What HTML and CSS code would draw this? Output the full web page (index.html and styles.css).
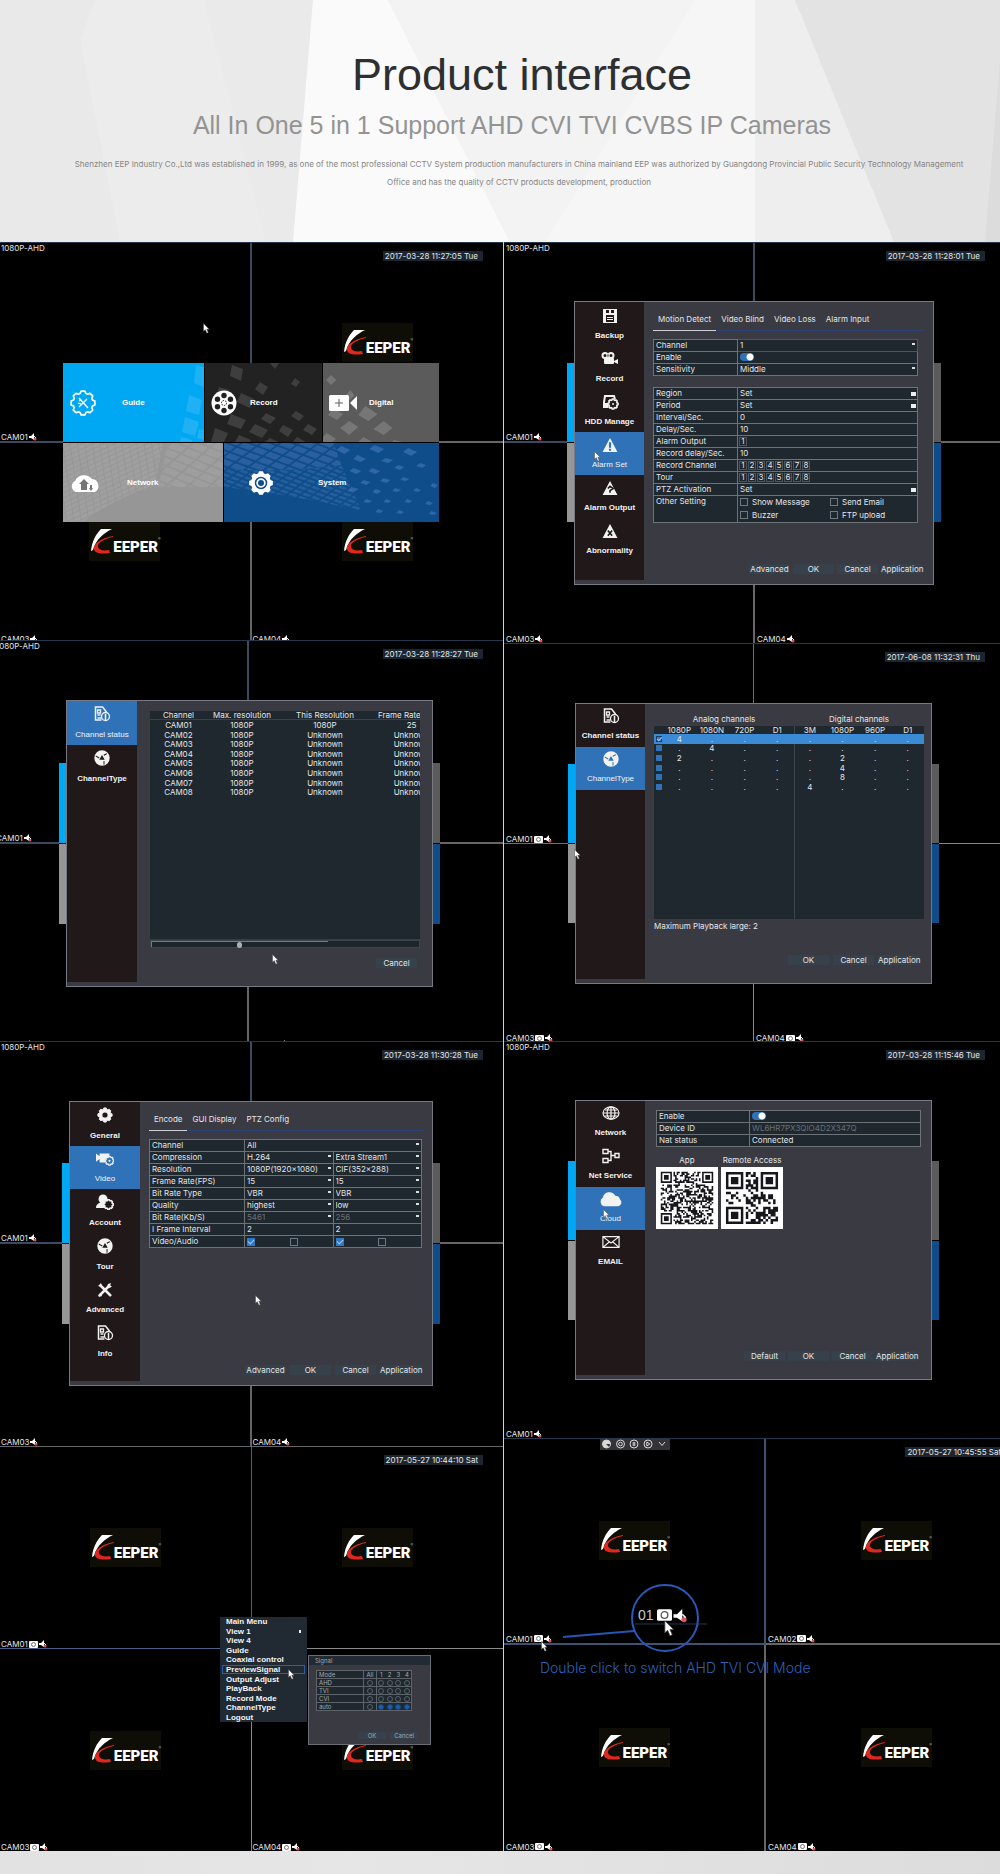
FILE: index.html
```html
<!DOCTYPE html>
<html lang="en">
<head>
<meta charset="utf-8">
<meta name="viewport" content="width=device-width, initial-scale=1">
<title>Product interface</title>
<link rel="stylesheet" href="styles.css">
</head>
<body>
<svg class="defs" aria-hidden="true">
  <defs>
    <path id="gear-shape" d="M11.85,-1.88L11.85,1.88L9.56,2.92L8.83,4.69L9.71,7.05L7.05,9.71L4.69,8.83L2.92,9.56L1.88,11.85L-1.88,11.85L-2.92,9.56L-4.69,8.83L-7.05,9.71L-9.71,7.05L-8.83,4.69L-9.56,2.92L-11.85,1.88L-11.85,-1.88L-9.56,-2.92L-8.83,-4.69L-9.71,-7.05L-7.05,-9.71L-4.69,-8.83L-2.92,-9.56L-1.88,-11.85L1.88,-11.85L2.92,-9.56L4.69,-8.83L7.05,-9.71L9.71,-7.05L8.83,-4.69L9.56,-2.92Z"/>
  </defs>
  <symbol id="i-cam" viewBox="0 0 9 7"><rect width="9" height="7" rx="1" fill="#fff"/><circle cx="4.500" cy="3.500" r="2" fill="none" stroke="#555" stroke-width=".8"/></symbol>
  <symbol id="i-mute" viewBox="0 0 8 8"><path d="M0 3h2l3-3v7L2 5H0z" fill="#fff"/><circle cx="6" cy="6" r="1.500" fill="#e2545c"/><path d="M5 3l2 2" stroke="#eee"/></symbol>
  <symbol id="i-cursor" viewBox="0 0 7 11"><path d="M.5.500v7.800l1.800-1.600 1.500 3.500 1.500-.7-1.500-3.300h2.400z" fill="#fff" stroke="#444" stroke-width=".5"/></symbol>
  <symbol id="i-swoosh" viewBox="0 0 22 25"><path d="M0 22C1 12 5 5 10 0h11C13 4 5 10 2 21z" fill="#fff"/><path d="M22 7C10 9 2 15 3 20c1 5 8 5 16 4l-1-3c-6 1-10 0-11-3C6 14 13 10 22 8z" fill="#e0281e"/></symbol>
  <symbol id="i-disk" viewBox="0 0 16 16"><path fill="currentColor" fill-rule="evenodd" d="M1 1h14v14H1zM4 2v3h3V2zM4 7v7h8V7zM9 2v3h3V2z"/><path stroke="currentColor" d="M5 9.500h6M5 11.500h6"/></symbol>
  <symbol id="i-film" viewBox="0 0 18 14"><g fill="currentColor"><path fill-rule="evenodd" d="M4 0a3.500 3.500 0 110 7 3.500 3.500 0 010-7m0 2a1.500 1.500 0 100 3 1.500 1.500 0 000-3M10 0a3.500 3.500 0 110 7 3.500 3.500 0 010-7m0 2a1.500 1.500 0 100 3 1.500 1.500 0 000-3"/><rect x="3" y="6" width="10" height="6" rx="1"/><path d="M13 9l4-2v5l-4-2z"/></g></symbol>
  <symbol id="i-hdd" viewBox="0 0 18 16"><path fill="none" stroke="currentColor" stroke-width="2" d="M7 13H3V8l1-6h9l1 3"/><path fill="currentColor" d="M2 9h5v5H2z"/><use href="#gear-shape" transform="translate(12 10) scale(.42)" fill="none" stroke="currentColor" stroke-width="4"/><circle cx="12" cy="10" r="1" fill="currentColor"/></symbol>
  <symbol id="i-warn" viewBox="0 0 16 15"><path fill="currentColor" fill-rule="evenodd" d="M8 1l7 13H1zM7 5v5h2V5zm0 6v2h2v-2z"/></symbol>
  <symbol id="i-warn-out" viewBox="0 0 16 15"><path fill="currentColor" d="M8 1l7 13H1z"/><path fill="none" stroke="#211819" stroke-width="1.500" d="M6 8l2-2 3 2-3 2v2"/></symbol>
  <symbol id="i-warn-x" viewBox="0 0 16 15"><path fill="currentColor" d="M8 1l7 13H1z"/><path stroke="#211819" stroke-width="1.500" d="M6 7l4 5M10 7l-4 5"/></symbol>
  <symbol id="i-doc" viewBox="0 0 17 16"><path fill="none" stroke="currentColor" stroke-width="1.500" d="M8 14H2V1h7l4 5"/><path fill="none" stroke="currentColor" stroke-width="1.300" d="M4 4h3v3H4zM4 9h3M4 12h4"/><circle cx="12" cy="10.500" r="4" fill="none" stroke="currentColor" stroke-width="1.300"/><path stroke="currentColor" stroke-width="1.500" d="M12 8v6"/></symbol>
  <symbol id="i-cycle" viewBox="0 0 16 16"><path fill="currentColor" fill-rule="evenodd" d="M8 .3a7.700 7.700 0 110 15.400A7.700 7.700 0 018 .3M8 5L5.300 9.800h5.400zM9.500 4.800l3-1.600.7.800-3 1.800zM10.500 11v3.500l-1 .3v-3.600zM5 8.400L1.600 6.600l.3-1L5.500 7.500z"/></symbol>
  <symbol id="i-gear" viewBox="0 0 16 16"><use href="#gear-shape" transform="translate(8 8) scale(.6)" fill="currentColor" stroke="currentColor" stroke-width="1.500"/><circle cx="8" cy="8" r="2.600" fill="#211819"/></symbol>
  <symbol id="i-video" viewBox="0 0 20 14"><path fill="currentColor" d="M0 1l4 3V1h11v3a6 6 0 00-5 7H4V7l-4 3z"/><use href="#gear-shape" transform="translate(15 9) scale(.4)" fill="none" stroke="currentColor" stroke-width="3.500"/><circle cx="15" cy="9" r="1.200" fill="currentColor"/></symbol>
  <symbol id="i-user" viewBox="0 0 18 16"><circle cx="7" cy="5" r="4.500" fill="currentColor"/><path fill="currentColor" d="M0 14c0-4 3-6 8-5v5z"/><use href="#gear-shape" transform="translate(12.500 10.500) scale(.4)" fill="#211819" stroke="currentColor" stroke-width="4"/></symbol>
  <symbol id="i-tools" viewBox="0 0 16 16"><path d="M3 3l10 10M13 3L3 13" stroke="currentColor" stroke-width="2.500"/><path d="M1 4l3-3 1 4zM10 10l5 3-2 2z" fill="currentColor"/><path d="M11 2l3-1-1 3 2 0-2 2-3-1zM1 13l3-2 1 3-3 1z" fill="currentColor"/></symbol>
  <symbol id="i-globe" viewBox="0 0 18 14"><g fill="none" stroke="currentColor" stroke-width="1.200"><ellipse cx="9" cy="7" rx="8" ry="6.200"/><ellipse cx="9" cy="7" rx="4" ry="6.200"/><path d="M9 1v12M1 7h16M3 4h12M3 10h12"/></g></symbol>
  <symbol id="i-net" viewBox="0 0 18 15"><g fill="none" stroke="currentColor" stroke-width="1.400"><path d="M1 1h5v4H1zM1 10h5v4H1zM13 5h4v4h-4zM6 3h3v9H6M9 7h4"/></g></symbol>
  <symbol id="i-cloud" viewBox="0 0 24 15"><path fill="currentColor" d="M5 15a5 5 0 01-1-9 7 7 0 0113-2 5 5 0 015 4 4 4 0 01-2 7z"/></symbol>
  <symbol id="i-mail" viewBox="0 0 20 14"><path fill="none" stroke="currentColor" stroke-width="1.300" d="M1 1h18v12H1zl9 7 9-7M1 13l7-6M19 13l-7-6"/></symbol>
  <symbol id="i-guide" viewBox="0 0 26 26"><use href="#gear-shape" transform="translate(13 13)" fill="none" stroke="#fff" stroke-width="1.700" stroke-linejoin="round"/><path d="M9 8l9 10M17 9l-8 8M9 11l3-1M8 13l3 1" stroke="#fff" stroke-width="1.300"/></symbol>
  <symbol id="i-reel" viewBox="0 0 26 26"><circle cx="13" cy="13" r="12.500" fill="#fff"/><g fill="#222"><circle cx="13" cy="5.500" r="2.700"/><circle cx="19.500" cy="9.200" r="2.700"/><circle cx="19.500" cy="16.800" r="2.700"/><circle cx="13" cy="20.500" r="2.700"/><circle cx="6.500" cy="16.800" r="2.700"/><circle cx="6.500" cy="9.200" r="2.700"/></g><circle cx="13" cy="13" r="2.500" fill="none" stroke="#222" stroke-dasharray="1.500 1"/></symbol>
  <symbol id="i-digital" viewBox="0 0 28 16"><rect width="20" height="16" rx="1.500" fill="#fff"/><path d="M21 8l7-7v14z" fill="#fff"/><path d="M10 4v8M6 8h8" stroke="#5c5c5c"/></symbol>
  <symbol id="i-upload" viewBox="0 0 30 18"><path fill="#fff" d="M6 18a6 6 0 01-1-11A10 10 0 0122 5a7 7 0 013 13z"/><path fill="#777" d="M14 5l5 5h-2v6h-6v-6H9zM20 11h2v3h1l-2 3-2-3h1z"/></symbol>
  <symbol id="i-system" viewBox="0 0 26 26"><use href="#gear-shape" transform="translate(13 13)" fill="#fff"/><circle cx="13" cy="13" r="5.500" fill="none" stroke="#0f4c8a" stroke-width="1.500"/><circle cx="13" cy="13" r="3" fill="#0f4c8a"/></symbol>
</svg>

<header class="hero">
  <svg class="hero-art" viewBox="0 0 1000 242" preserveAspectRatio="none" aria-hidden="true">
    <rect width="1000" height="242" fill="#ececec"/>
    <path d="M0 0h95L80 40l40 202H0z" fill="#e9e9e9"/>
    <path d="M204 0h109l-20 242h-27z" fill="#eaeaea"/>
    <path d="M313 0h75l122 242H293z" fill="#fafafa"/>
    <path d="M388 0h367v242H510z" fill="#f3f3f3"/>
    <path d="M695 0h60v242H545z" fill="#f6f6f6"/>
    <path d="M755 0h40l99 242H755z" fill="#eeeeee"/>
    <path d="M795 0h205v242H894z" fill="#e3e3e3"/>
    <path d="M1000 60v182h-15z" fill="#dcdcdc"/>
  </svg>
  <h1>Product interface</h1>
  <p class="tagline">All In One 5 in 1 Support AHD CVI TVI CVBS IP Cameras</p>
  <p class="blurb">Shenzhen EEP Industry Co.,Ltd was established in 1999, as one of the most professional CCTV System production manufacturers in China mainland EEP was authorized by Guangdong Provincial Public Security Technology Management<br>Office and has the quality of CCTV products development, production</p>
</header>

<main class="gallery">
  <div class="column column-left">

    <section class="screen s-home">
      <div class="cell c1"><span class="top">1080P-AHD</span><span class="foot">CAM01<svg class="mute"><use href="#i-mute"/></svg></span></div>
      <div class="cell c2"><time class="stamp">2017-03-28 11:27:05 Tue</time><div class="logo"><svg><use href="#i-swoosh"/></svg><b>EEPER</b><sup>®</sup></div></div>
      <div class="cell c3"><div class="logo"><svg><use href="#i-swoosh"/></svg><b>EEPER</b><sup>®</sup></div><span class="foot">CAM03<svg class="mute"><use href="#i-mute"/></svg></span></div>
      <div class="cell c4"><div class="logo"><svg><use href="#i-swoosh"/></svg><b>EEPER</b><sup>®</sup></div><span class="foot">CAM04<svg class="mute"><use href="#i-mute"/></svg></span></div>
      <nav class="home">
        <a class="tile t-guide" href="#guide">
          <svg class="mosaic" viewBox="0 0 141 79" preserveAspectRatio="none"><g fill="#fff" opacity=".12"><path d="M133 2l8 2v20l-10-4zM126 32l13 5-3 15-13-4zM122 54l14 5-4 14-13-4zM118 74l11 3v2h-12zM136 66l5 1v10l-7-2z"/></g></svg>
          <svg class="glyph"><use href="#i-guide"/></svg><span>Guide</span></a>
        <a class="tile t-record" href="#record">
          <svg class="mosaic" viewBox="0 0 117 79" preserveAspectRatio="none"><g fill="#fff" opacity=".13"><path d="M27 2l11 4-2 12-11-5zM55 19l8 5-5 8-8-6zM65 0h9l-4 6zM90 15l5 4-4 5-5-3zM36 30l13 6-4 9-13-6zM14 24l10 3-2 8-10-4zM61 50l10 5-6 6-9-5zM91 48l8 5-5 5-8-5zM26 51l15 6-5 9-14-5zM50 61l13 6-6 8-13-6zM78 62l10 5-5 7-9-6zM103 61l9 5-5 6-9-5zM10 65l13 5-4 9H6zM34 72l12 5-1 2H30zM65 75l8 4H60zM92 74l9 5H88z"/></g></svg>
          <svg class="glyph"><use href="#i-reel"/></svg><span>Record</span></a>
        <a class="tile t-digital" href="#digital">
          <svg class="mosaic" viewBox="0 0 115 79" preserveAspectRatio="none"><g fill="#fff" opacity=".17"><path d="M8 12l5 5-5 5-5-5zM27 27l4 5-4 5-5-4zM42 43l12 8-9 7-10-6zM10 45l10 6-6 6-9-5zM26 58l9 6-9 8-9-7zM60 58l9 7-9 7-10-6zM4 70l9 6-4 3H0v-5zM40 74l9 5H35zM70 77l9 2h-10z"/></g></svg>
          <svg class="glyph"><use href="#i-digital"/></svg><span>Digital</span></a>
        <a class="tile t-network" href="#network">
          <svg class="mosaic" viewBox="0 0 160 79" preserveAspectRatio="none"><defs><pattern id="weave" width="7" height="5" patternUnits="userSpaceOnUse" patternTransform="skewY(-18) rotate(-8)"><path d="M0 0h6v4H0z" fill="#fff" opacity=".09"/></pattern><pattern id="weave2" width="15" height="9" patternUnits="userSpaceOnUse" patternTransform="skewY(22) skewX(-38)"><path d="M0 0h13v7H0z" fill="#fff" opacity=".08"/></pattern></defs><path d="M0 0h100l-8 42Q50 56 20 79H0z" fill="url(#weave)"/><path d="M105 0h55v44H95z" fill="url(#weave2)"/></svg>
          <svg class="glyph"><use href="#i-upload"/></svg><span>Network</span></a>
        <a class="tile t-system" href="#system">
          <svg class="mosaic" viewBox="0 0 216 79" preserveAspectRatio="none"><defs><pattern id="cubes" width="13" height="8" patternUnits="userSpaceOnUse" patternTransform="skewY(20) skewX(-42)"><path d="M0 0h11v6H0z" fill="#6f8fd8" opacity=".28"/></pattern><pattern id="fine" width="9" height="5" patternUnits="userSpaceOnUse" patternTransform="skewY(20) skewX(-42)"><path d="M0 0h7v3H0z" fill="#6f9fe0" opacity=".22"/></pattern></defs><path d="M0 0h110l8 22Q60 30 0 26z" fill="url(#cubes)"/><path d="M0 26Q60 30 118 22l20 46Q70 52 0 44z" fill="url(#fine)"/><g fill="#5f8fd8" opacity=".4"><path d="M118 3l9 4-6 4-8-4zM151 2l10 4-6 4-9-4zM185 5l9 4-6 4-8-4zM134 12l9 4-6 3-7-3zM162 15l8 2-5 3-7-2zM130 25l8 3-5 3-7-3zM149 25l8 3-5 3-7-3zM175 22l6 2-4 3-6-2zM197 20l6 2-4 3-6-2zM140 37l7 2-4 3-6-2zM160 35l7 2-4 3-6-2zM180 34l6 2-3 2-6-1zM210 40l5 2-3 3-5-2zM128 44l7 2-4 3-6-2zM152 46l6 2-4 3-5-2zM172 45l6 2-4 2-5-1zM193 45l5 2-3 2-5-1zM143 56l6 2-4 2-5-1zM163 56l5 2-3 2-5-1zM184 56l5 2-3 2-5-1zM205 58l5 2-3 2-5-1zM155 66l5 2-3 2-5-1zM176 67l5 2-3 2-5-1zM208 68l6 2-3 2-5-1z"/></g></svg>
          <svg class="glyph"><use href="#i-system"/></svg><span>System</span></a>
      </nav>
      <svg class="cursor"><use href="#i-cursor"/></svg>
    </section>

    <section class="screen s-status">
      <div class="cell c1"><span class="top">1080P-AHD</span><span class="foot">CAM01<svg class="mute"><use href="#i-mute"/></svg></span></div>
      <div class="cell c2"><time class="stamp">2017-03-28 11:28:27 Tue</time></div>
      <div class="cell c3"><span class="foot">CAM03<svg class="mute"><use href="#i-mute"/></svg></span></div>
      <div class="cell c4"><span class="foot">CAM04<svg class="mute"><use href="#i-mute"/></svg></span></div>
      <div class="peek"><i></i><i></i><i></i><i></i></div>
      <div class="dialog">
        <nav class="side">
          <a class="on" href="#status"><svg><use href="#i-doc"/></svg>Channel status</a>
          <a href="#type"><svg><use href="#i-cycle"/></svg>ChannelType</a>
        </nav>
        <div class="body">
          <div class="list-box">
            <table class="list">
              <colgroup><col class="w1"><col class="w2"><col class="w3"><col class="w4"></colgroup>
              <thead><tr><th>Channel</th><th>Max. resolution</th><th>This Resolution</th><th class="lead">Frame Rate</th></tr></thead>
              <tbody>
                <tr><td>CAM01</td><td>1080P</td><td>1080P</td><td>25</td></tr>
                <tr><td>CAM02</td><td>1080P</td><td>Unknown</td><td>Unknown</td></tr>
                <tr><td>CAM03</td><td>1080P</td><td>Unknown</td><td>Unknown</td></tr>
                <tr><td>CAM04</td><td>1080P</td><td>Unknown</td><td>Unknown</td></tr>
                <tr><td>CAM05</td><td>1080P</td><td>Unknown</td><td>Unknown</td></tr>
                <tr><td>CAM06</td><td>1080P</td><td>Unknown</td><td>Unknown</td></tr>
                <tr><td>CAM07</td><td>1080P</td><td>Unknown</td><td>Unknown</td></tr>
                <tr><td>CAM08</td><td>1080P</td><td>Unknown</td><td>Unknown</td></tr>
              </tbody>
            </table>
          </div>
          <div class="scroll"><div class="thumb"><i></i></div></div>
          <div class="actions"><button>Cancel</button></div>
        </div>
      </div>
      <svg class="cursor"><use href="#i-cursor"/></svg>
    </section>

    <section class="screen s-encode">
      <div class="cell c1"><span class="top">1080P-AHD</span><span class="foot">CAM01<svg class="mute"><use href="#i-mute"/></svg></span></div>
      <div class="cell c2"><time class="stamp">2017-03-28 11:30:28 Tue</time></div>
      <div class="cell c3"><span class="foot">CAM03<svg class="mute"><use href="#i-mute"/></svg></span></div>
      <div class="cell c4"><span class="foot">CAM04<svg class="mute"><use href="#i-mute"/></svg></span></div>
      <div class="peek"><i></i><i></i><i></i><i></i></div>
      <div class="dialog">
        <nav class="side">
          <a href="#general"><svg><use href="#i-gear"/></svg>General</a>
          <a class="on" href="#video"><svg><use href="#i-video"/></svg>Video</a>
          <a href="#account"><svg><use href="#i-user"/></svg>Account</a>
          <a href="#tour"><svg><use href="#i-cycle"/></svg>Tour</a>
          <a href="#advanced"><svg><use href="#i-tools"/></svg>Advanced</a>
          <a href="#info"><svg><use href="#i-doc"/></svg>Info</a>
        </nav>
        <div class="body">
          <nav class="tabs"><a class="on" href="#encode">Encode</a><a href="#gui">GUI Display</a><a href="#ptz">PTZ Config</a></nav>
          <table class="form">
            <colgroup><col class="k"><col><col></colgroup>
            <tr><th><label for="e1">Channel</label></th><td colspan="2"><select id="e1"><option>All</option></select></td></tr>
            <tr><th><label for="e2">Compression</label></th><td><select id="e2"><option>H.264</option></select></td><td><select aria-label="Stream"><option>Extra Stream1</option></select></td></tr>
            <tr><th><label for="e3">Resolution</label></th><td><select id="e3"><option>1080P(1920x1080)</option></select></td><td><select aria-label="Extra resolution"><option>CIF(352x288)</option></select></td></tr>
            <tr><th><label for="e4">Frame Rate(FPS)</label></th><td><select id="e4"><option>15</option></select></td><td><select aria-label="Extra frame rate"><option>15</option></select></td></tr>
            <tr><th><label for="e5">Bit Rate Type</label></th><td><select id="e5"><option>VBR</option></select></td><td><select aria-label="Extra bit rate type"><option>VBR</option></select></td></tr>
            <tr><th><label for="e6">Quality</label></th><td><select id="e6"><option>highest</option></select></td><td><select aria-label="Extra quality"><option>low</option></select></td></tr>
            <tr><th><label for="e7">Bit Rate(Kb/S)</label></th><td><select id="e7" disabled><option>5461</option></select></td><td><select aria-label="Extra bit rate" disabled><option>256</option></select></td></tr>
            <tr><th><label for="e8">I Frame Interval</label></th><td><input id="e8" type="text" value="2"></td><td><input aria-label="Extra interval" type="text" value="2"></td></tr>
            <tr><th><label for="e9">Video/Audio</label></th><td><div class="pair"><input id="e9" type="checkbox" checked><input aria-label="Audio" type="checkbox"></div></td><td><div class="pair"><input aria-label="Extra video" type="checkbox" checked><input aria-label="Extra audio" type="checkbox"></div></td></tr>
          </table>
          <div class="actions"><button>Advanced</button><button>OK</button><button>Cancel</button><button>Application</button></div>
        </div>
      </div>
      <svg class="cursor"><use href="#i-cursor"/></svg>
    </section>

    <section class="screen s-menu">
      <div class="cell c1"><div class="logo"><svg><use href="#i-swoosh"/></svg><b>EEPER</b><sup>®</sup></div><span class="foot">CAM01<svg class="cam"><use href="#i-cam"/></svg><svg class="mute"><use href="#i-mute"/></svg></span></div>
      <div class="cell c2"><time class="stamp">2017-05-27 10:44:10 Sat</time><div class="logo"><svg><use href="#i-swoosh"/></svg><b>EEPER</b><sup>®</sup></div></div>
      <div class="cell c3"><div class="logo"><svg><use href="#i-swoosh"/></svg><b>EEPER</b><sup>®</sup></div><span class="foot">CAM03<svg class="cam"><use href="#i-cam"/></svg><svg class="mute"><use href="#i-mute"/></svg></span></div>
      <div class="cell c4"><div class="logo"><svg><use href="#i-swoosh"/></svg><b>EEPER</b><sup>®</sup></div><span class="foot">CAM04<svg class="cam"><use href="#i-cam"/></svg><svg class="mute"><use href="#i-mute"/></svg></span></div>
      <div class="menu">
        <button>Main Menu</button><button class="sub">View 1</button><button>View 4</button><button>Guide</button><button>Coaxial control</button><button class="on">PreviewSignal</button><button>Output Adjust</button><button>PlayBack</button><button>Record Mode</button><button>ChannelType</button><button>Logout</button>
      </div>
      <div class="signal">
        <h2>Signal</h2>
        <table>
          <colgroup><col class="m"><col class="a"><col><col><col><col></colgroup>
          <tr><th>Mode</th><td>All</td><td>1</td><td>2</td><td>3</td><td>4</td></tr>
          <tr><th>AHD</th><td><input type="radio" aria-label="AHD all"></td><td><input type="radio" name="r1" aria-label="AHD 1"></td><td><input type="radio" name="r2" aria-label="AHD 2"></td><td><input type="radio" name="r3" aria-label="AHD 3"></td><td><input type="radio" name="r4" aria-label="AHD 4"></td></tr>
          <tr><th>TVI</th><td><input type="radio" aria-label="TVI all"></td><td><input type="radio" name="r1" aria-label="TVI 1"></td><td><input type="radio" name="r2" aria-label="TVI 2"></td><td><input type="radio" name="r3" aria-label="TVI 3"></td><td><input type="radio" name="r4" aria-label="TVI 4"></td></tr>
          <tr><th>CVI</th><td><input type="radio" aria-label="CVI all"></td><td><input type="radio" name="r1" aria-label="CVI 1"></td><td><input type="radio" name="r2" aria-label="CVI 2"></td><td><input type="radio" name="r3" aria-label="CVI 3"></td><td><input type="radio" name="r4" aria-label="CVI 4"></td></tr>
          <tr><th>auto</th><td><input type="radio" aria-label="auto all"></td><td><input type="radio" name="r1" aria-label="auto 1" checked></td><td><input type="radio" name="r2" aria-label="auto 2" checked></td><td><input type="radio" name="r3" aria-label="auto 3" checked></td><td><input type="radio" name="r4" aria-label="auto 4" checked></td></tr>
        </table>
        <div class="actions"><button>OK</button><button>Cancel</button></div>
      </div>
      <svg class="cursor"><use href="#i-cursor"/></svg>
    </section>
  </div>

  <div class="column column-right">

    <section class="screen s-alarm">
      <div class="cell c1"><span class="top">1080P-AHD</span><span class="foot">CAM01<svg class="mute"><use href="#i-mute"/></svg></span></div>
      <div class="cell c2"><time class="stamp">2017-03-28 11:28:01 Tue</time></div>
      <div class="cell c3"><span class="foot">CAM03<svg class="mute"><use href="#i-mute"/></svg></span></div>
      <div class="cell c4"><span class="foot">CAM04<svg class="mute"><use href="#i-mute"/></svg></span></div>
      <div class="peek"><i></i><i></i><i></i><i></i></div>
      <div class="dialog">
        <nav class="side">
          <a href="#backup"><svg><use href="#i-disk"/></svg>Backup</a>
          <a href="#rec"><svg><use href="#i-film"/></svg>Record</a>
          <a href="#hdd"><svg><use href="#i-hdd"/></svg>HDD Manage</a>
          <a class="on" href="#alarm"><svg><use href="#i-warn"/></svg>Alarm Set</a>
          <a href="#out"><svg><use href="#i-warn-out"/></svg>Alarm Output</a>
          <a href="#abn"><svg><use href="#i-warn-x"/></svg>Abnormality</a>
        </nav>
        <div class="body">
          <nav class="tabs"><a class="on" href="#motion">Motion Detect</a><a href="#blind">Video Blind</a><a href="#loss">Video Loss</a><a href="#input">Alarm Input</a></nav>
          <table class="form">
            <colgroup><col class="k"><col></colgroup>
            <tr><th><label for="a1">Channel</label></th><td class="focus"><select id="a1"><option>1</option></select></td></tr>
            <tr><th><label for="a2">Enable</label></th><td><input id="a2" class="switch" type="checkbox" checked></td></tr>
            <tr><th><label for="a3">Sensitivity</label></th><td><select id="a3"><option>Middle</option></select></td></tr>
          </table>
          <table class="form second">
            <colgroup><col class="k"><col></colgroup>
            <tr><th>Region</th><td><button class="set">Set</button></td></tr>
            <tr><th>Period</th><td><button class="set">Set</button></td></tr>
            <tr><th><label for="a4">Interval/Sec.</label></th><td><input id="a4" type="text" value="0"></td></tr>
            <tr><th><label for="a5">Delay/Sec.</label></th><td><input id="a5" type="text" value="10"></td></tr>
            <tr><th>Alarm Output</th><td><div class="chs"><button>1</button></div></td></tr>
            <tr><th><label for="a6">Record delay/Sec.</label></th><td><input id="a6" type="text" value="10"></td></tr>
            <tr><th>Record Channel</th><td><div class="chs"><button>1</button><button>2</button><button>3</button><button>4</button><button>5</button><button>6</button><button>7</button><button>8</button></div></td></tr>
            <tr><th>Tour</th><td><div class="chs"><button>1</button><button>2</button><button>3</button><button>4</button><button>5</button><button>6</button><button>7</button><button>8</button></div></td></tr>
            <tr><th>PTZ Activation</th><td><button class="set">Set</button></td></tr>
            <tr><th>Other Setting</th><td><div class="opts"><label><input type="checkbox">Show Message</label><label><input type="checkbox">Send Email</label><label><input type="checkbox">Buzzer</label><label><input type="checkbox">FTP upload</label></div></td></tr>
          </table>
          <div class="actions"><button>Advanced</button><button>OK</button><button>Cancel</button><button>Application</button></div>
        </div>
      </div>
      <svg class="cursor"><use href="#i-cursor"/></svg>
    </section>

    <section class="screen s-type">
      <div class="cell c1"><span class="foot">CAM01<svg class="cam"><use href="#i-cam"/></svg><svg class="mute"><use href="#i-mute"/></svg></span></div>
      <div class="cell c2"><time class="stamp">2017-06-08 11:32:31 Thu</time></div>
      <div class="cell c3"><span class="foot">CAM03<svg class="cam"><use href="#i-cam"/></svg><svg class="mute"><use href="#i-mute"/></svg></span></div>
      <div class="cell c4"><span class="foot">CAM04<svg class="cam"><use href="#i-cam"/></svg><svg class="mute"><use href="#i-mute"/></svg></span></div>
      <div class="peek"><i></i><i></i><i></i><i></i></div>
      <div class="dialog">
        <nav class="side">
          <a href="#status2"><svg><use href="#i-doc"/></svg>Channel status</a>
          <a class="on" href="#type2"><svg><use href="#i-cycle"/></svg>ChannelType</a>
        </nav>
        <div class="body">
          <div class="groups"><span>Analog channels</span><span>Digital channels</span></div>
          <div class="matrix-box">
            <table class="matrix">
              <thead><tr><td class="pick"></td><th>1080P</th><th>1080N</th><th>720P</th><th>D1</th><th>3M</th><th>1080P</th><th>960P</th><th>D1</th></tr></thead>
              <tbody>
                <tr class="on"><td><input type="checkbox" aria-label="Mode 1" checked></td><td>4</td><td>.</td><td>.</td><td>.</td><td>.</td><td>.</td><td>.</td><td>.</td></tr>
                <tr><td><input type="checkbox" aria-label="Mode 2"></td><td>.</td><td>4</td><td>.</td><td>.</td><td>.</td><td>.</td><td>.</td><td>.</td></tr>
                <tr><td><input type="checkbox" aria-label="Mode 3"></td><td>2</td><td>.</td><td>.</td><td>.</td><td>.</td><td>2</td><td>.</td><td>.</td></tr>
                <tr><td><input type="checkbox" aria-label="Mode 4"></td><td>.</td><td>.</td><td>.</td><td>.</td><td>.</td><td>4</td><td>.</td><td>.</td></tr>
                <tr><td><input type="checkbox" aria-label="Mode 5"></td><td>.</td><td>.</td><td>.</td><td>.</td><td>.</td><td>8</td><td>.</td><td>.</td></tr>
                <tr><td><input type="checkbox" aria-label="Mode 6"></td><td>.</td><td>.</td><td>.</td><td>.</td><td>4</td><td>.</td><td>.</td><td>.</td></tr>
              </tbody>
            </table>
          </div>
          <p class="note">Maximum Playback large: 2</p>
          <div class="actions"><button>OK</button><button>Cancel</button><button>Application</button></div>
        </div>
      </div>
      <svg class="cursor"><use href="#i-cursor"/></svg>
    </section>

    <section class="screen s-cloud">
      <div class="cell c1"><span class="top">1080P-AHD</span><time class="stamp">2017-03-28 11:15:46 Tue</time><span class="foot">CAM01<svg class="mute"><use href="#i-mute"/></svg></span></div>
      <div class="peek"><i></i><i></i><i></i><i></i></div>
      <div class="dialog">
        <nav class="side">
          <a href="#net"><svg><use href="#i-globe"/></svg>Network</a>
          <a href="#svc"><svg><use href="#i-net"/></svg>Net Service</a>
          <a class="on" href="#cloud"><svg class="wide"><use href="#i-cloud"/></svg>Cloud</a>
          <a href="#mail"><svg><use href="#i-mail"/></svg>EMAIL</a>
        </nav>
        <div class="body">
          <table class="form">
            <colgroup><col class="k"><col></colgroup>
            <tr><th><label for="n1">Enable</label></th><td><input id="n1" class="switch" type="checkbox" checked></td></tr>
            <tr><th><label for="n2">Device ID</label></th><td><input id="n2" type="text" value="WL6HR7PX3QIO4D2X347Q" disabled></td></tr>
            <tr><th><label for="n3">Nat status</label></th><td><input id="n3" type="text" value="Connected" readonly></td></tr>
          </table>
          <div class="codes">
            <figure><figcaption>App</figcaption><svg class="qr" data-size="33" data-seed="7" data-quiet="3"></svg></figure>
            <figure><figcaption>Remote Access</figcaption><svg class="qr" data-size="21" data-seed="20" data-quiet="2"></svg></figure>
          </div>
          <div class="actions"><button>Default</button><button>OK</button><button>Cancel</button><button>Application</button></div>
        </div>
      </div>
      <svg class="cursor"><use href="#i-cursor"/></svg>
    </section>

    <section class="screen s-switch">
      <div class="cell c1"><div class="logo"><svg><use href="#i-swoosh"/></svg><b>EEPER</b><sup>®</sup></div><span class="foot">CAM01<svg class="cam"><use href="#i-cam"/></svg><svg class="mute"><use href="#i-mute"/></svg></span></div>
      <div class="cell c2"><time class="stamp">2017-05-27 10:45:55 Sat</time><div class="logo"><svg><use href="#i-swoosh"/></svg><b>EEPER</b><sup>®</sup></div><span class="foot">CAM02<svg class="cam"><use href="#i-cam"/></svg><svg class="mute"><use href="#i-mute"/></svg></span></div>
      <div class="cell c3"><div class="logo"><svg><use href="#i-swoosh"/></svg><b>EEPER</b><sup>®</sup></div><span class="foot">CAM03<svg class="cam"><use href="#i-cam"/></svg><svg class="mute"><use href="#i-mute"/></svg></span></div>
      <div class="cell c4"><div class="logo"><svg><use href="#i-swoosh"/></svg><b>EEPER</b><sup>®</sup></div><span class="foot">CAM04<svg class="cam"><use href="#i-cam"/></svg><svg class="mute"><use href="#i-mute"/></svg></span></div>
      <svg class="toolbar" viewBox="0 0 70 11" aria-hidden="true"><rect width="70" height="11" fill="#343436"/><g fill="none" stroke="#d8d8d8"><circle cx="6.500" cy="5" r="4" fill="#d8d8d8"/><circle cx="20.500" cy="5" r="4"/><circle cx="34" cy="5" r="4"/><circle cx="48" cy="5" r="4"/><circle cx="20.500" cy="5" r="1.800"/><path d="M34 3v4M32.500 4h3M32.500 6h3"/><path d="M46.800 3l3 2-3 2z" /><path d="M59 3l3 3.500L65 3"/></g><path d="M6 5h4a4 4 0 01-1 3z" fill="#343436"/></svg>
      <svg class="lens" viewBox="0 0 150 68" aria-hidden="true"><path d="M0 53L71 47" stroke="#2458b4" stroke-width="2"/><path d="M72 40h72" stroke="#26384c"/><circle cx="102" cy="34" r="33" fill="none" stroke="#2b57b8" stroke-width="2"/><text x="75" y="36">01</text><use href="#i-cam" x="94" y="25" width="15" height="12"/><use href="#i-mute" x="110" y="25" width="15" height="14"/><use href="#i-cursor" x="101" y="36" width="11" height="17"/></svg>
      <p class="caption">Double click to switch AHD TVI CVI Mode</p>
      <svg class="cursor"><use href="#i-cursor"/></svg>
    </section>
  </div>
</main>
<footer class="base"></footer>
<script src="qr.js"></script>
</body>
</html>
```

FILE: qr.js
```js
// Fills each .qr svg with three finder squares and a repeatable module field.
document.querySelectorAll('.qr').forEach(function (svg) {
  var n = +svg.dataset.size, q = +svg.dataset.quiet, s = +svg.dataset.seed, d = '';
  function next() { s = (s * 1103515245 + 12345) % 2147483648; return s / 2147483648; }
  function finder(x, y) {
    var spots = [[0, 0], [n - 7, 0], [0, n - 7]];
    for (var i = 0; i < 3; i++) {
      var u = x - spots[i][0], v = y - spots[i][1];
      if (u < -1 || v < -1 || u > 7 || v > 7) continue;
      var r = Math.max(Math.abs(u - 3), Math.abs(v - 3));
      return r === 3 || r < 2;
    }
    return null;
  }
  for (var y = 0; y < n; y++) {
    for (var x = 0; x < n; x++) {
      var f = finder(x, y), bit = next() < 0.5;
      if (f === null ? bit : f) d += 'M' + (x + q) + ' ' + (y + q) + 'h1v1h-1z';
    }
  }
  svg.setAttribute('viewBox', '0 0 ' + (n + 2 * q) + ' ' + (n + 2 * q));
  var path = document.createElementNS('http://www.w3.org/2000/svg', 'path');
  path.setAttribute('d', d);
  svg.appendChild(path);
});
```

FILE: styles.css
```css
* { box-sizing: border-box; }

body {
  margin: 0;
  background: #e2e2e2;
  font-family: Inter, "Liberation Sans", Arial, sans-serif;
  font-size: 8px;
  line-height: 10px;
  color: #e4e6e8;
}

a { color: inherit; text-decoration: none; }
p, h1, h2, figure { margin: 0; }
button, input, select { font: inherit; color: inherit; margin: 0; padding: 0; border: 0; background: none; border-radius: 0; }
.defs { position: absolute; width: 0; height: 0; }

/* Heading */
.hero {
  position: relative;
  min-height: 242px;
  padding: 48px 20px 0;
  text-align: center;
}
.hero-art { position: absolute; inset: 0; width: 100%; height: 100%; z-index: -1; }
.hero h1, .tagline { font-family: "Liberation Sans", Arial, sans-serif; }
.hero h1 { padding-left: 44px; font-size: 45px; line-height: 54px; font-weight: 400; color: #2e2f30; }
.tagline { margin-top: 8px; padding-left: 24px; font-size: 25px; line-height: 30px; color: #939393; }
.blurb { margin: 15px -20px 0; padding-left: 38px; font-size: 8px; line-height: 18px; color: #858585; white-space: nowrap; }

/* Two columns of recorder screens */
.gallery { display: grid; grid-template-columns: 504fr 496fr; }
.column { display: flex; flex-direction: column; min-width: 0; --bleed: 1px; }
.column-left { border-right: 1px solid #c9d2e2; }
.column-right { --bleed: 2px; }

.screen {
  --v: 1fr 1fr;
  --h: 1fr 1fr;
  --line: 2px;
  --drop: 1px;
  --blue: #3c4a60;
  --gray: #666;
  position: relative;
  overflow: hidden;
  display: grid;
  grid-template-columns: var(--v);
  grid-template-rows: var(--h);
  background: #000;
  border-top: 1px solid #26364c;
}
.cell {
  display: grid;
  grid-template: 1fr auto 1fr / 1fr;
  justify-items: center;
  min-width: 0;
  border: 0 solid var(--gray);
}
.c1 { border-width: 0 var(--line) var(--line) 0; border-color: var(--blue); }
.c2 { border-bottom-width: var(--line); }
.c3 { border-right-width: var(--line); }
.top, .foot, .stamp { grid-column: 1; white-space: nowrap; }
.top { grid-row: 1; place-self: start; margin-left: var(--bleed); }
.foot { grid-row: 3; place-self: end start; margin: 0 0 calc(0px - var(--drop)) var(--bleed); display: flex; align-items: center; gap: 1px; }
.foot svg { flex: none; }
.cam { width: 9px; height: 7px; }
.mute { width: 8px; height: 8px; }
.stamp { grid-row: 1; place-self: start end; margin: 8px 20px 0 0; padding: 0 5px 0 2px; background: #1d2630; }
.logo {
  grid-area: 2 / 1;
  display: flex;
  width: 71px;
  height: 39px;
  padding: 7px 2px;
  background: #0e0d06;
  color: #fff;
}
.logo svg { flex: none; width: 22px; height: 25px; }
.logo b { align-self: flex-end; font: 900 15px/13px "Liberation Sans Narrow", Roboto, sans-serif; }
.logo sup { font-size: 4px; line-height: 20px; color: #aaa; }
.cursor { position: absolute; width: 7px; height: 11px; }

/* Home tiles */
.home {
  position: absolute;
  left: 63px;
  top: 120px;
  display: grid;
  grid-template-columns: 141px 18px 98px 116px;
  grid-template-rows: 79px 79px;
  gap: 1px;
  background: #000;
  font: 700 8px/10px "Liberation Sans", Arial, sans-serif;
  color: #fff;
}
.tile { position: relative; display: flex; align-items: center; overflow: hidden; }
.tile span, .tile .glyph { position: relative; }
.glyph { flex: none; width: 26px; height: 26px; }
.mosaic { position: absolute; inset: 0; width: 100%; height: 100%; }
.t-guide { grid-column: 1; background: #00a7f2; padding-left: 7px; gap: 26px; }
.t-record { grid-column: 2 / 4; background: #222; padding-left: 6px; gap: 13px; }
.t-digital { grid-column: 4; background: #5b5b5b; padding-left: 6px; gap: 12px; }
.t-network { grid-column: 1 / 3; background: #969696; padding-left: 7px; gap: 27px; }
.t-system { grid-column: 3 / 5; background: #0f4c8a; padding-left: 24px; gap: 44px; }
.t-digital .glyph { width: 28px; height: 16px; }
.t-network .glyph { width: 30px; height: 18px; }

/* Tiles showing behind a window */
.peek { position: absolute; display: grid; grid-template: 1fr 1fr / 1fr 1fr; row-gap: 1px; background: #000; }
.peek i:nth-child(1) { background: #00a7f2; }
.peek i:nth-child(2) { background: #5b5b5b; }
.peek i:nth-child(3) { background: #969696; }
.peek i:nth-child(4) { background: #0f4c8a; }

/* Windows */
.dialog {
  position: absolute;
  display: flex;
  background: #3a3a42;
  border: 1px solid #777a84;
}
.side {
  flex: none;
  width: 69px;
  margin-bottom: 4px;
  background: #211819;
  display: grid;
  align-content: start;
  grid-auto-rows: 43px;
  font: 700 8px/10px "Liberation Sans", Arial, sans-serif;
  color: #f2f2f2;
}
.side a { display: flex; flex-direction: column; align-items: center; justify-content: space-between; padding: 5px 0; }
.side svg { width: 18px; height: 16px; }
.side svg.wide { width: 23px; }
.side .on { background: #2f72b8; font-weight: 400; }
.body { flex: 1; min-width: 0; display: flex; flex-direction: column; padding: 10px 9px 10px; }
.tabs { display: flex; border-bottom: 1px solid #2b4378; }
.tabs a { padding: 0 5px 3px 5px; line-height: 15px; margin-bottom: -1px; border-bottom: 1px solid transparent; }
.tabs .on { border-color: #d0d0d8; }

.form { width: 265px; margin-top: 8px; table-layout: fixed; border-collapse: collapse; background: #1f272f; }
.form .k { width: 84px; }
.form th, .form td { height: 12px; padding: 0 0 0 2px; border: 1px solid #6c7276; font-weight: 400; text-align: left; vertical-align: top; line-height: 11px; }
.form .focus { border-color: #2c5a9c; }
.form select, .form input[type="text"] { display: block; width: 100%; height: 11px; line-height: 11px; }
.form select { appearance: none; background: linear-gradient(#ddd, #ddd) no-repeat right 2px top 3px / 3px 2px; }
.form :disabled { opacity: 1; color: #6a7076; }
.second { margin-top: 11px; }
.set { display: block; width: 100%; height: 11px; text-align: left; background: linear-gradient(#eee, #eee) no-repeat right 1px top 4px / 5px 4px; }
.chs { display: flex; gap: 1px; padding-top: 1px; margin-left: -1px; }
.chs button { width: 8px; height: 9px; line-height: 7px; border: 1px solid #4c555c; text-align: center; }
.opts { display: grid; grid-template: 12px 14px / 90px 1fr; align-items: center; }
.opts label { display: flex; align-items: center; gap: 4px; white-space: nowrap; }
.pair { display: grid; grid-template-columns: 1fr 1fr; align-items: center; height: 11px; }
input[type="checkbox"] { appearance: none; display: block; width: 8px; height: 8px; border: 1px solid #6c7a88; }
input[type="checkbox"]:checked { background: #2f78c8; border-color: #2f78c8; }
input[type="checkbox"]:checked::after { content: ""; display: block; width: 5px; height: 3px; border: solid #a4c8f0; border-width: 0 0 1px 1px; transform: rotate(-45deg); }
input.switch:checked { width: 14px; height: 8px; margin-top: 1px; border: 0; border-radius: 4px; background: radial-gradient(circle at 10px 4px, #fff 3px, transparent 4px), #2f72b8; }
input.switch::after { display: none !important; }

.actions { display: flex; justify-content: flex-end; gap: 4px; margin: auto 2px 0 0; }
.actions button { width: 41px; height: 10px; line-height: 10px; background: #37414b; white-space: nowrap; }

/* Per-screen geometry */
.s-home { min-height: 398px; --h: 201fr 197fr; --drop: 4px; }
.s-home .c1, .s-status .c1, .s-type .c1 { --drop: 1px; }
.s-home .cursor { left: 203px; top: 80px; }

.s-status { min-height: 401px; --v: 249fr 255fr; --h: 204fr 197fr; --drop: 8px; --bleed: -4px; }
.s-status .c4 { --bleed: 2px; }
.s-status .peek { left: 59px; top: 122px; width: 381px; height: 161px; }
.s-status .dialog { left: 66px; top: 59px; width: 367px; height: 287px; }
.s-status .side { width: 70px; grid-auto-rows: 44px; }
.s-status .body { padding: 10px 12px 18px 13px; }
.s-status .actions { margin-right: 3px; }
.s-status .cursor { left: 272px; top: 313px; }

.s-encode { min-height: 405px; --h: 203fr 202fr; }
.s-encode .peek { left: 62px; top: 121px; width: 378px; height: 161px; }
.s-encode .dialog { left: 69px; top: 59px; width: 364px; height: 285px; }
.s-encode .side { width: 70px; padding-bottom: 17px; grid-template-rows: repeat(6, 1fr); align-content: stretch; }
.s-encode .form { width: 273px; }
.s-encode .form .k { width: 95px; }
.s-encode .cursor { left: 255px; top: 253px; }

.s-menu { min-height: 405px; --line: 1px; --blue: #46608a; --gray: #8a8a8a; --h: 203fr 202fr; border-color: #666; }
.s-menu .cursor { left: 288px; top: 222px; }

.s-alarm { min-height: 401px; --v: 251fr 245fr; --h: 201fr 200fr; }
.s-alarm .stamp, .s-type .stamp { margin-right: 15px; }
.s-alarm .peek { left: 63px; top: 120px; width: 374px; height: 159px; }
.s-alarm .dialog { left: 70px; top: 58px; width: 360px; height: 284px; }
.s-alarm .side { padding-top: 1px; }
.s-alarm .actions { gap: 3px; }
.s-alarm .cursor { left: 90px; top: 208px; }

.s-type { min-height: 398px; --v: 250fr 246fr; --line: 1px; --blue: #5a708c; --gray: #888; --drop: 2px; --h: 201fr 197fr; }
.s-type .peek { left: 64px; top: 120px; width: 371px; height: 159px; }
.s-type .dialog { left: 71px; top: 59px; width: 357px; height: 281px; }
.s-type .side a, .s-cloud .side a { padding: 4px 0 6px; }
.s-type .body { padding: 10px 7px 18px 9px; }
.s-type .actions { margin-right: 5px; }
.s-type .cursor { left: 70px; top: 205px; }

.s-cloud { min-height: 397px; --v: 1fr; --h: 1fr; --line: 0px; }
.s-cloud .stamp { margin-right: 15px; }
.s-cloud .peek { left: 64px; top: 119px; width: 371px; height: 159px; }
.s-cloud .dialog { left: 71px; top: 58px; width: 357px; height: 280px; }
.s-cloud .body { padding: 9px 10px 18px 11px; }
.s-cloud .form { margin-top: 0; }
.s-cloud .form .k { width: 93px; }
.s-cloud .actions { margin-right: 4px; gap: 3px; }
.s-cloud .cursor { left: 99px; top: 167px; }

.s-switch { min-height: 413px; --v: 262fr 234fr; --h: 206fr 207fr; --blue: #3c5470; }
/* The right-hand feeds run past the edge of the column. */
.s-switch .c2, .s-switch .c4 { margin-right: -26px; }
.s-switch .cursor { left: 37px; top: 202px; }

/* Channel list */
.list-box { height: 228px; overflow: hidden; background: #20282f; }
.list { width: 300px; height: 86px; table-layout: fixed; border-collapse: collapse; text-align: center; line-height: 8px; }
.list th, .list td { padding: 0; font-weight: 400; white-space: nowrap; }
.list thead { border-bottom: 1px solid #37424a; }
.list .lead { text-align: left; padding-left: 5px; }
.w1 { width: 57px; }
.w2 { width: 70px; }
.w3 { width: 96px; }
.w4 { width: 77px; }
.scroll { height: 8px; margin-top: 1px; background: #1c252a; border: 1px solid #39464a; }
.thumb { width: 66%; height: 6px; border-top: 1px solid #6f7f7c; border-left: 1px solid #6f7f7c; }
.thumb i { display: block; width: 5px; height: 6px; margin: 0 auto; border-radius: 3px; background: #a9b0b4; }

/* Channel type matrix */
.groups { display: grid; grid-template-columns: 140fr 130fr; text-align: center; height: 12px; }
.matrix-box { height: 193px; background: linear-gradient(#3b4650, #3b4650) no-repeat 140px 0 / 1px 100%, #20282f; }
.matrix { width: 100%; height: 66px; table-layout: fixed; border-collapse: collapse; text-align: center; line-height: 8px; }
.matrix th, .matrix td { padding: 0; font-weight: 400; }
.pick { width: 9px; }
.matrix .on { background: #3b8ad6; }
.matrix input { width: 6px; height: 6px; margin-left: 2px; background: #2f72b8; border-color: #2f72b8; }
.matrix .on input { border-color: #1c3c60; }
.matrix .on input::after { width: 4px; height: 2px; }
.note { margin-top: 2px; }

/* Cloud codes */
.codes { display: flex; gap: 3px; margin-top: 8px; text-align: center; }
.codes figure { width: 62px; }
.codes figcaption { margin-bottom: 2px; line-height: 10px; white-space: nowrap; }
.qr { display: block; width: 100%; aspect-ratio: 1; background: #fff; fill: #16161c; }

/* Context menu and signal window */
.menu {
  position: absolute;
  left: 220px;
  top: 170px;
  width: 87px;
  height: 105px;
  display: grid;
  grid-auto-rows: 1fr;
  padding: 0 2px;
  background: #212a32;
  font: 700 8px/8px "Liberation Sans", Arial, sans-serif;
  color: #f4f4f4;
}
.menu button { min-height: 0; padding: 0 3px; border: 1px solid transparent; text-align: left; line-height: 7px; }
.menu .on { border-color: #2b5ea8; }
.menu .sub { background: linear-gradient(#eee, #eee) no-repeat right 3px center / 2px 3px; }
.signal {
  position: absolute;
  left: 308px;
  top: 208px;
  width: 123px;
  height: 90px;
  display: flex;
  flex-direction: column;
  border: 1px solid #6a6d77;
  background: #3a3a42;
  font-size: 6px;
  line-height: 8px;
  color: #a4a8ac;
}
.signal h2 { padding-left: 6px; font-size: 6px; font-weight: 400; line-height: 9px; background: #222b33; }
.signal table { width: 96px; margin: 5px 0 0 7px; table-layout: fixed; border-collapse: collapse; background: #20282f; border: 1px solid #5d6368; }
.signal th, .signal td { height: 8px; padding: 0; font-weight: 400; line-height: 7px; border-bottom: 1px solid #5d6368; text-align: center; }
.signal th { text-align: left; padding-left: 2px; }
.signal th, .signal td:nth-child(2) { border-right: 1px solid #5d6368; }
.m { width: 47px; }
.a { width: 13px; }
.signal input { appearance: none; display: block; width: 6px; height: 6px; margin: 0 auto; border: 1px solid #59626a; border-radius: 3px; }
.signal input:checked { background: #1f5db0; border-color: #17457e; }
.signal .actions { margin-right: 12px; margin-bottom: 5px; }
.signal .actions button { width: 28px; height: 7px; line-height: 7px; }

/* Mode switch callout */
.toolbar { position: absolute; left: 96px; top: 0; width: 70px; height: 11px; }
.lens { position: absolute; left: 59px; top: 145px; width: 150px; height: 68px; }
.lens text { font: 14px "Liberation Sans", Arial, sans-serif; fill: #c4c8cc; }
.caption { position: absolute; left: 36px; top: 220px; font-size: 14px; line-height: 18px; font-weight: 300; color: #2a62bc; white-space: nowrap; }

.base { min-height: 23px; background: linear-gradient(90deg, #e2e2e2, #e6e6e6 35%, #dcdcdc); }
```
